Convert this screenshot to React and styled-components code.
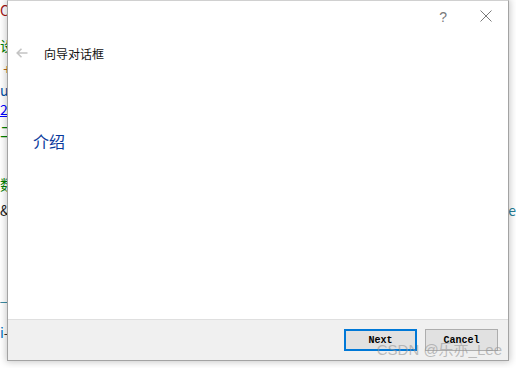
import React from "react";
import styled, { createGlobalStyle } from "styled-components";

const GlobalStyle = createGlobalStyle`
  html, body {
    margin: 0;
    padding: 0;
    background: #ffffff;
    overflow: hidden;
  }
`;

const Desktop = styled.div`
  position: relative;
  width: 516px;
  height: 368px;
  overflow: hidden;
  background: #ffffff;
`;

const Editor = styled.div`
  display: flex;
  flex-direction: column;
  padding-top: 1px;
  font-family: "Noto Sans CJK SC", "Liberation Mono", monospace;
  font-size: 14px;
  line-height: 18px;
`;

const Line = styled.div`
  height: ${(p) => p.h}px;
  display: flex;
  justify-content: space-between;
`;

const Code = styled.span`
  color: ${(p) => p.c};
  text-decoration: ${(p) => (p.u ? "underline" : "none")};
  white-space: pre;
`;

const Dialog = styled.div`
  position: absolute;
  left: 7px;
  top: 0;
  width: 502px;
  height: 361px;
  box-sizing: border-box;
  display: flex;
  flex-direction: column;
  background: #ffffff;
  border: 1px solid #a3a3a3;
  border-top-color: #d0d0d0;
  box-shadow: 0 0 7px 1px rgba(0, 0, 0, 0.22);
  font-family: "Noto Sans CJK SC", "Liberation Sans", sans-serif;
`;

const TitleBar = styled.div`
  height: 29px;
  display: flex;
  justify-content: flex-end;
  align-items: center;
  gap: 33px;
  padding-right: 16px;
`;

const Help = styled.span`
  font-family: "Liberation Sans", sans-serif;
  font-size: 14px;
  color: #7a7a7a;
  margin-top: 2px;
`;

const Header = styled.div`
  height: 46px;
  display: flex;
  align-items: center;
  gap: 16px;
  padding-left: 8px;
`;

const Heading = styled.span`
  font-size: 12px;
  color: #111;
`;

const Body = styled.div`
  flex: 1;
  padding: 54px 0 0 25px;
`;

const Section = styled.div`
  font-size: 16px;
  line-height: 22px;
  color: #0a3a9c;
`;

const Footer = styled.div`
  height: 40px;
  display: flex;
  justify-content: flex-end;
  align-items: center;
  gap: 8px;
  padding-right: 10px;
  background: #f0f0f0;
  border-top: 1px solid #dfdfdf;
`;

const Button = styled.button`
  width: 73px;
  height: 22px;
  box-sizing: border-box;
  padding: 0;
  background: #e1e1e1;
  border: ${(p) => (p.primary ? "2px solid #0078d7" : "1px solid #adadad")};
  font-family: "Liberation Mono", monospace;
  font-size: 10px;
  font-weight: bold;
  color: #000;
`;

const Watermark = styled.div`
  position: absolute;
  right: 14px;
  bottom: 9px;
  font-family: "Liberation Sans", "Noto Sans CJK SC", sans-serif;
  font-size: 15px;
  color: rgba(150, 150, 150, 0.6);
  pointer-events: none;
`;

const lines = [
  { h: 35, l: [["C", "#a31515"], ["(", "#c18401"]] },
  { h: 24, l: [["设", "#008000"]] },
  { h: 21, l: [[" +", "#b86a1c"]] },
  { h: 19, l: [["u", "#0451a5"], ["¦", "#555"]] },
  { h: 22, l: [["2", "#0000ff", true], ["(", "#7f3fbf"]] },
  { h: 53, l: [["二", "#008000"]] },
  { h: 26, l: [["数", "#008000"]] },
  { h: 85, l: [["&", "#222"], ["(", "#af00db"]], r: [["e", "#267f99"]] },
  { h: 37, l: [["_", "#267f99"], ["(", "#795e26"]] },
  { h: 20, l: [["i", "#0070c1"], ["-", "#333"]] },
];

function Back() {
  return (
    <svg width="12" height="10" viewBox="0 0 12 10">
      <path d="M11.5 5H1.2M5.5 0.7L1.2 5l4.3 4.3" fill="none" stroke="#c4c4c4" strokeWidth="1.6" />
    </svg>
  );
}

function Close() {
  return (
    <svg width="12" height="12" viewBox="0 0 12 12">
      <path d="M0.5 0.5l11 11M11.5 0.5l-11 11" stroke="#7a7a7a" strokeWidth="1" />
    </svg>
  );
}

const App = () => {
  return (
    <Desktop>
      <GlobalStyle />
      <Editor>
        {lines.map((line, i) => (
          <Line key={i} h={line.h}>
            <span>
              {line.l.map(([t, c, u], j) => (
                <Code key={j} c={c} u={u}>{t}</Code>
              ))}
            </span>
            <span>
              {(line.r || []).map(([t, c], j) => (
                <Code key={j} c={c}>{t}</Code>
              ))}
            </span>
          </Line>
        ))}
      </Editor>
      <Dialog>
        <TitleBar>
          <Help>?</Help>
          <Close />
        </TitleBar>
        <Header>
          <Back />
          <Heading>向导对话框</Heading>
        </Header>
        <Body>
          <Section>介绍</Section>
        </Body>
        <Footer>
          <Button primary>Next</Button>
          <Button>Cancel</Button>
        </Footer>
      </Dialog>
      <Watermark>CSDN @乐亦_Lee</Watermark>
    </Desktop>
  );
};

export default App;
